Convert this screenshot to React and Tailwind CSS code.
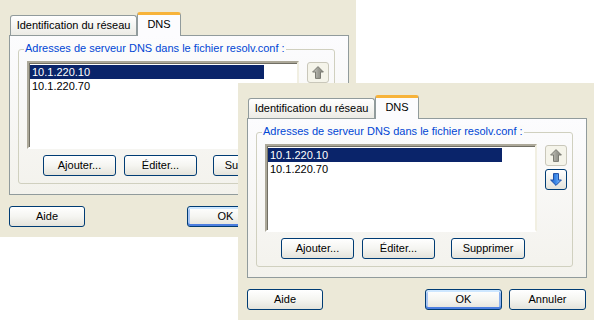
import clsx from 'clsx';

const addresses = ['10.1.220.10', '10.1.220.70'];

function XpButton({ children, className, isDefault }) {
  return (
    <button
      className={clsx(
        'h-[21px] rounded-[3px] border border-[#003C74] bg-linear-to-b from-white via-[#F5F5F1] to-[#E4E3DB] text-[11px] leading-none text-black',
        isDefault &&
          'shadow-[inset_0_-2px_0_#4D7FE0,inset_0_2px_0_#CEE7FF,inset_2px_0_0_#A9C6F3,inset_-2px_0_0_#8DB2EE]',
        className
      )}
    >
      {children}
    </button>
  );
}

function Arrow({ down, enabled, id }) {
  return (
    <svg width="12" height="13" viewBox="0 0 12 13" className={down ? 'rotate-180' : ''}>
      <defs>
        <linearGradient id={id} x1="0" y1="0" x2="1" y2="0">
          <stop offset="0" stopColor={enabled ? '#8CC2FF' : '#C9C9C1'} />
          <stop offset="0.55" stopColor={enabled ? '#3A86E6' : '#9C9C94'} />
          <stop offset="1" stopColor={enabled ? '#2462C8' : '#85857D'} />
        </linearGradient>
      </defs>
      <path
        d="M6 0.6 L11.4 6 L8.5 6 L8.5 12.4 L3.5 12.4 L3.5 6 L0.6 6 Z"
        fill={`url(#${id})`}
        stroke={enabled ? '#1D4FA6' : '#7A7A72'}
        strokeWidth="1"
        strokeLinejoin="round"
      />
    </svg>
  );
}

function MoveButton({ down, enabled, id }) {
  return (
    <button
      className={clsx(
        'flex h-[21px] w-[22px] items-center justify-center rounded-[3px] border',
        enabled
          ? 'border-[#003C74] bg-linear-to-b from-white to-[#E4E3DB]'
          : 'border-[#C9C7BA] bg-[#F5F4EA]'
      )}
    >
      <Arrow down={down} enabled={enabled} id={id} />
    </button>
  );
}

function Dialog({ prefix, downEnabled }) {
  return (
    <div className="flex h-[237px] w-[356px] flex-col bg-[#ECE9D8] pl-[9px] pt-3 font-['Liberation_Sans',Arial,sans-serif] text-[11px] text-black">
      {/* Tabs */}
      <div className="flex h-[23px] items-end pl-px">
        <div className="flex h-[20px] w-[127px] items-center justify-center rounded-t-[3px] border border-b-0 border-[#919B9C] bg-linear-to-b from-white to-[#ECEBE5]">
          Identification du réseau
        </div>
        <div className="relative z-10 -mb-px flex h-[24px] w-[44px] items-center justify-center rounded-t-[3px] border border-b-0 border-[#919B9C] border-t-[3px] border-t-[#F7B33A] bg-[#FCFCFE] pb-[2px]">
          DNS
        </div>
      </div>

      {/* Tab panel */}
      <div className="h-[160px] w-[340px] border border-[#919B9C] bg-linear-to-b from-[#FCFCFE] to-[#F3F2EC] pl-2 pt-[13px]">
        <div className="relative h-[135px] w-[317px] rounded-[3px] border border-[#D0D0BF] pl-2 pt-[11px]">
          <span className="absolute -top-[8px] left-[5px] bg-[#FBFBFB] px-px leading-[13px] text-[#0046D5]">
            Adresses de serveur DNS dans le fichier resolv.conf :
          </span>
          <div className="flex gap-2">
            <div className="h-[88px] w-[272px] border-2 border-b-white border-l-[#ACA899] border-r-[#F1EFE2] border-t-[#ACA899] bg-white pl-px pt-[2px] shadow-[inset_1px_1px_0_#716F64]">
              {addresses.map((a, i) => (
                <div
                  key={a}
                  className={clsx(
                    'h-[14px] w-[234px] pl-[2px] leading-[14px]',
                    i === 0 && 'bg-[#0A246A] text-white'
                  )}
                >
                  {a}
                </div>
              ))}
            </div>
            <div className="mt-px flex flex-col gap-[3px]">
              <MoveButton id={prefix + 'up'} enabled={false} />
              <MoveButton id={prefix + 'down'} down enabled={downEnabled} />
            </div>
          </div>
          <div className="mt-[6px] flex pl-4">
            <XpButton className="w-[73px]">Ajouter...</XpButton>
            <XpButton className="ml-2 w-[73px]">Éditer...</XpButton>
            <XpButton className="ml-4 w-[74px]">Supprimer</XpButton>
          </div>
        </div>
      </div>

      {/* Bottom buttons */}
      <div className="mt-[11px] flex w-[339px]">
        <XpButton className="w-[76px]">Aide</XpButton>
        <XpButton isDefault className="ml-auto w-[77px]">OK</XpButton>
        <XpButton className="ml-[7px] w-[77px]">Annuler</XpButton>
      </div>
    </div>
  );
}

export default function App() {
  return (
    <div className="relative h-[320px] w-[594px] overflow-hidden bg-white">
      <div className="absolute left-0 top-0">
        <Dialog prefix="a" downEnabled={false} />
      </div>
      <div className="absolute left-[238px] top-[83px]">
        <Dialog prefix="b" downEnabled />
      </div>
    </div>
  );
}
